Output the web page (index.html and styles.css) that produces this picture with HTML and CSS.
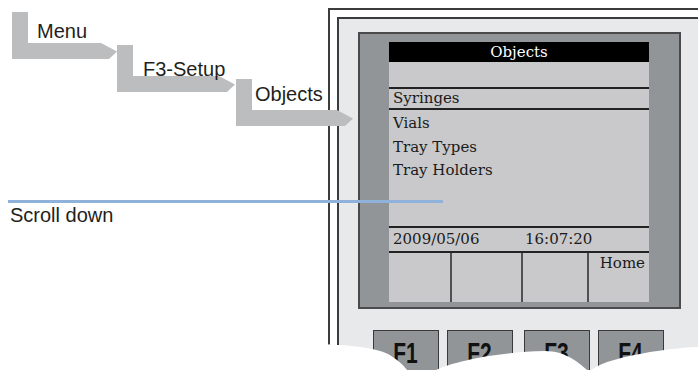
FILE: index.html
```html
<!DOCTYPE html>
<html>
<head>
<title>Objects menu</title>
<link rel="stylesheet" href="styles.css">
</head>
<body>
  <div class="figure">
    <div class="device">
      <div class="panel">
        <div class="bezel">
          <div class="lcd">
            <div class="lcd-title">Objects</div>
            <div class="lcd-blank"></div>
            <div class="lcd-selected">Syringes</div>
            <ul class="lcd-list">
              <li>Vials</li>
              <li>Tray Types</li>
              <li>Tray Holders</li>
            </ul>
            <div class="lcd-status">
              <span>2009/05/06</span>
              <span>16:07:20</span>
            </div>
            <div class="lcd-softkeys">
              <div></div>
              <div></div>
              <div></div>
              <div>Home</div>
            </div>
          </div>
        </div>
        <div class="fkeys">
          <div class="fkey"><span>F1</span></div>
          <div class="fkey"><span>F2</span></div>
          <div class="fkey fkey-wide-gap"><span>F3</span></div>
          <div class="fkey"><span>F4</span></div>
        </div>
      </div>
    </div>

    <!-- menu path -->
    <div class="step step-1">
      <div class="step-shape"></div>
      <span class="step-label">Menu</span>
    </div>
    <div class="step step-2">
      <div class="step-shape"></div>
      <span class="step-label">F3-Setup</span>
    </div>
    <div class="step step-3">
      <div class="step-shape"></div>
      <span class="step-label">Objects</span>
    </div>

    <div class="callout">
      <div class="callout-line"></div>
      <span class="callout-label">Scroll down</span>
    </div>

    <svg class="tear" viewBox="0 0 698 370" width="698" height="370">
      <path d="M300,370 L300,344 C345,344 373,347 388,354 C397,359 403,365 407,370 Z" />
      <path d="M436,370 C455,361 500,352 545,351 C565,351 578,362 587,370 Z" />
      <path d="M591,370 C602,362 622,357 650,352 C670,349 688,347 698,347 L698,370 Z" />
    </svg>
  </div>
</body>
</html>
```

FILE: styles.css
```css
body {
  margin: 0;
  background: #fff;
  font-family: "Liberation Sans", Arial, sans-serif;
  color: #231f20;
}

.figure {
  position: relative;
  width: 698px;
  height: 370px;
  overflow: hidden;
  box-sizing: border-box;
  padding: 8px 0 0 328px;
}

/* instrument */
.device {
  height: 100%;
  box-sizing: border-box;
  border-left: 2px solid #3c3c3c;
  border-top: 2px solid #3c3c3c;
  padding: 7px 0 0 7px;
}

.panel {
  height: 100%;
  box-sizing: border-box;
  border-left: 2px solid #3c3c3c;
  border-top: 2px solid #3c3c3c;
  background: #e8e9eb;
  padding: 13px 0 0 19px;
}

.bezel {
  width: 323px;
  box-sizing: border-box;
  background: #929598;
  border: 2px solid #4a4a4a;
  padding: 8px 30px 5px 29px;
}

.lcd {
  width: 260px;
  height: 260px;
  background: #c9c9cb;
  display: flex;
  flex-direction: column;
  font-family: "DejaVu Serif", serif;
  font-size: 15px;
  color: #1a1a1a;
}

.lcd-title {
  height: 20px;
  box-sizing: border-box;
  padding-top: 1px;
  line-height: 19px;
  background: #000;
  color: #fff;
  text-align: center;
}

.lcd-blank {
  height: 25px;
}

.lcd-selected {
  height: 19px;
  line-height: 19px;
  border-top: 2px solid #222;
  border-bottom: 2px solid #222;
  padding-left: 4px;
}

.lcd-list {
  flex: 1;
  list-style: none;
  margin: 0;
  padding: 2px 0 0 4px;
  line-height: 23.5px;
}

.lcd-status {
  display: grid;
  grid-template-columns: 132px auto;
  height: 23px;
  line-height: 23px;
  border-top: 2px solid #222;
  border-bottom: 2px solid #222;
  padding-left: 4px;
}

.lcd-softkeys {
  height: 49px;
  display: grid;
  grid-template-columns: 61px 71px 66px 1fr;
}

.lcd-softkeys div + div {
  border-left: 2px solid #505050;
}

.lcd-softkeys div:last-child {
  text-align: right;
  padding: 1px 4px 0 0;
  line-height: 18px;
}

.fkeys {
  display: flex;
  gap: 8px;
  margin: 21px 0 0 15px;
}

.fkey {
  width: 66px;
  height: 60px;
  box-sizing: border-box;
  background: #929598;
  border: 1px solid #3a3a3a;
  display: flex;
  justify-content: center;
  padding-top: 7px;
  font-weight: bold;
  font-size: 30px;
  line-height: 30px;
  color: #111;
}

.fkey span {
  display: inline-block;
  transform: scaleX(0.7);
}

.fkey-wide-gap {
  margin-left: 3px;
}

/* menu path arrows */
.step {
  position: absolute;
  width: 105px;
  height: 47px;
}

.step-shape {
  width: 100%;
  height: 100%;
  background: #bcbdbf;
  clip-path: polygon(0 0, 16px 0, 16px 31px, calc(100% - 16px) 31px, 100% 39.5px, calc(100% - 8px) 47px, 0 47px);
}

.step-label {
  position: absolute;
  font-size: 20px;
  line-height: 20px;
  white-space: nowrap;
}

.step-1 {
  left: 12px;
  top: 12px;
}

.step-1 .step-label {
  left: 25px;
  top: 8.7px;
}

.step-2 {
  left: 117px;
  top: 45px;
  width: 118px;
}

.step-2 .step-label {
  left: 26px;
  top: 14.4px;
}

.step-3 {
  left: 236px;
  top: 79px;
  width: 117px;
}

.step-3 .step-label {
  left: 19px;
  top: 5.4px;
}

/* scroll callout */
.callout {
  position: absolute;
  left: 8px;
  top: 200px;
}

.callout-line {
  width: 435px;
  height: 3px;
  background: #8fb1da;
}

.callout-label {
  display: block;
  margin: 2.4px 0 0 2px;
  font-size: 20px;
  line-height: 20px;
}

.tear {
  position: absolute;
  left: 0;
  top: 0;
  fill: #fff;
}
```
